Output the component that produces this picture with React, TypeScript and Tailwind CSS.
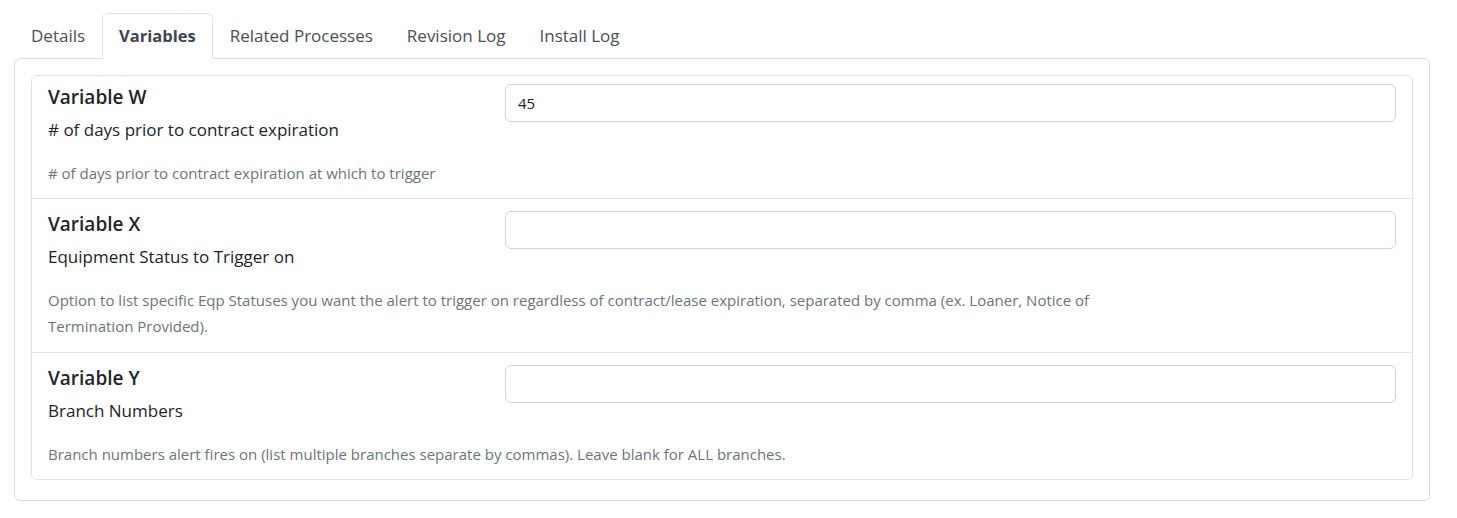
import { useState } from 'react';

const tabs = ['Details', 'Variables', 'Related Processes', 'Revision Log', 'Install Log'];

const variables = [
  {
    name: 'Variable W',
    label: '# of days prior to contract expiration',
    help: '# of days prior to contract expiration at which to trigger',
    value: '45',
    pad: 'px-4 pb-3 pt-2',
  },
  {
    name: 'Variable X',
    label: 'Equipment Status to Trigger on',
    help: 'Option to list specific Eqp Statuses you want the alert to trigger on regardless of contract/lease expiration, separated by comma (ex. Loaner, Notice of Termination Provided).',
    value: '',
    pad: 'border-t border-[#e2e2e2] px-4 pb-[13px] pt-3',
  },
  {
    name: 'Variable Y',
    label: 'Branch Numbers',
    help: 'Branch numbers alert fires on (list multiple branches separate by commas). Leave blank for ALL branches.',
    value: '',
    pad: 'border-t border-[#e2e2e2] px-4 pb-3 pt-3',
  },
];

export default function App() {
  const [active, setActive] = useState('Variables');

  return (
    <div className="min-h-[518px] bg-white pl-[14px] pt-[13px] font-['Open_Sans',sans-serif] text-[#212529]">
      <nav className="relative z-10 -mb-px flex w-[1416px]">
        {tabs.map((tab) => (
          <button
            key={tab}
            onClick={() => setActive(tab)}
            className={
              tab === active
                ? 'flex h-[46px] items-center rounded-t-md border border-[#dee2e6] border-b-white bg-white px-4 text-[16.5px] font-bold text-[#3d4651]'
                : 'flex h-[46px] items-center border border-transparent px-4 text-[17px] text-[#495057]'
            }
          >
            {tab}
          </button>
        ))}
      </nav>

      <div className="w-[1416px] rounded-md border border-[#dcdcdc] px-4 pb-5 pt-4">
        <div className="overflow-hidden rounded-md border border-[#e2e2e2]">
          {variables.map((v) => (
            <div key={v.name} className={v.pad}>
              <div className="flex">
                <div className="w-[457px] shrink-0">
                  <h5 className="text-[19px] font-semibold leading-[26px] text-[#212529]">{v.name}</h5>
                  <div className="mt-2 text-[17px] leading-6">{v.label}</div>
                </div>
                <input
                  defaultValue={v.value}
                  className="h-[38px] flex-1 rounded-md border border-[#ced4da] px-3 text-[15px] text-[#212529] outline-none"
                />
              </div>
              <p className="mt-[18px] max-w-[1117px] text-[15px] leading-[26px] text-[#6c757d]">{v.help}</p>
            </div>
          ))}
        </div>
      </div>
    </div>
  );
}
